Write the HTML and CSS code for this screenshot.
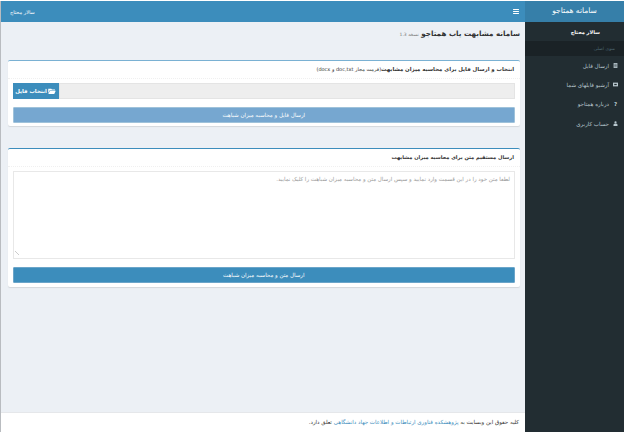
FILE: index.html
```html
<!DOCTYPE html>
<html lang="fa" dir="rtl">
<head>
  <meta charset="UTF-8">
  <title>سامانه همتاجو</title>
  <link rel="stylesheet" href="styles.css">
</head>
<body>
  <div class="wrapper">
    <!-- Sidebar -->
    <aside class="sidebar">
      <div class="logo">سامانه همتاجو</div>
      <div class="user-panel">سالار محتاج</div>
      <div class="menu-header">منوی اصلی</div>
      <ul class="menu">
        <li>
          <svg class="menu-icon" viewBox="0 0 8 8"><path d="M1 0h6v8H1z" fill="#b8c7ce"/><path d="M2 2h4M2 4h4M2 6h4" stroke="#222d32" stroke-width=".8"/></svg>
          <span>ارسال فایل</span>
        </li>
        <li>
          <svg class="menu-icon" viewBox="0 0 8 8"><path d="M0 1h8v6H0z" fill="#b8c7ce"/><path d="M2 3h4v2H2z" fill="#222d32"/></svg>
          <span>آرشیو فایلهای شما</span>
        </li>
        <li>
          <span class="menu-help">?</span>
          <span>درباره همتاجو</span>
        </li>
        <li>
          <svg class="menu-icon" viewBox="0 0 8 8"><circle cx="4" cy="2" r="1.8" fill="#b8c7ce"/><path d="M.8 8V6q0-2 3.2-2t3.2 2v2z" fill="#b8c7ce"/></svg>
          <span>حساب کاربری</span>
        </li>
      </ul>
    </aside>

    <!-- Main Content Area -->
    <div class="main">
      <header class="topbar">
        <svg class="hamburger" viewBox="0 0 7 6"><path d="M0 0h7v1.2H0zM0 2.400h7v1.200H0zM0 4.800h7V6H0z" fill="#fff"/></svg>
        <span class="topbar-user">سالار محتاج</span>
      </header>

      <div class="content">
        <h1 class="page-title">سامانه مشابهت یاب همتاجو <small>نسخه 1.3</small></h1>

        <section class="box box-file">
          <h2 class="box-title">انتخاب و ارسال فایل برای محاسبه میزان مشابهت<span class="formats">(فرمت مجاز doc,txt و docx)</span></h2>
          <div class="box-body">
            <div class="file-row">
              <span class="file-name"></span>
              <button class="file-btn">
                <svg class="folder-icon" viewBox="0 0 10 8"><path d="M0 1h4l1 1h4v1H2L0 7zM2.400 3.800H10L8 8H0z" fill="#fff"/></svg>
                انتخاب فایل
              </button>
            </div>
            <button class="submit submit-light">ارسال فایل و محاسبه میزان شباهت</button>
          </div>
        </section>

        <section class="box box-text">
          <h2 class="box-title">ارسال مستقیم متن برای محاسبه میزان مشابهت</h2>
          <div class="box-body">
            <textarea class="text-input" placeholder="لطفا متن خود را در این قسمت وارد نمایید و سپس ارسال متن و محاسبه میزان شباهت را کلیک نمایید."></textarea>
            <button class="submit">ارسال متن و محاسبه میزان شباهت</button>
          </div>
        </section>
      </div>

      <footer class="footer">
        کلیه حقوق این وبسایت به <a href="#">پژوهشکده فناوری ارتباطات و اطلاعات جهاد دانشگاهی</a> تعلق دارد.
      </footer>
    </div>
  </div>
</body>
</html>
```

FILE: styles.css
```css
/* General Reset */
* {
  margin: 0;
  padding: 0;
  box-sizing: border-box;
}

html,
body {
  height: 100%;
  overflow: hidden;
}

body {
  font-family: 'DejaVu Sans', sans-serif;
  font-size: 5px;
  color: #333;
  background-color: #fff;
  padding-top: 1px;
}

.wrapper {
  display: flex;
  height: 431px;
}

/* Sidebar */
.sidebar {
  width: 99px;
  flex-shrink: 0;
  background-color: #222d32;
}

.logo {
  height: 21px;
  line-height: 20px;
  text-align: center;
  font-size: 7.500px;
  color: #fff;
  background-color: #367fa9;
}

.user-panel {
  height: 19px;
  line-height: 20px;
  padding-right: 24px;
  font-weight: bold;
  color: #fff;
}

.menu-header {
  height: 15px;
  line-height: 15px;
  padding-right: 9px;
  font-size: 4.500px;
  color: #4b646f;
  background-color: #1a2226;
}

.menu {
  list-style: none;
}

.menu li {
  display: flex;
  align-items: center;
  gap: 4px;
  height: 19.300px;
  padding-right: 6px;
  font-size: 5.500px;
  color: #b8c7ce;
}

.menu-icon {
  width: 5px;
  height: 5px;
  flex-shrink: 0;
}

.menu-help {
  width: 5px;
  text-align: center;
  font-weight: bold;
}

/* Main Content Area */
.main {
  flex: 1;
  display: flex;
  flex-direction: column;
  border-left: 1.500px solid #b9bcc0;
}

.topbar {
  height: 21px;
  flex-shrink: 0;
  display: flex;
  align-items: center;
  justify-content: space-between;
  padding: 0 6px 0 9px;
  background-color: #3c8dbc;
}

.hamburger {
  width: 6px;
  height: 5px;
}

.topbar-user {
  color: #fff;
}

.content {
  flex: 1;
  padding: 0 5px 0 6.500px;
  background-color: #ecf0f5;
}

.page-title {
  height: 38px;
  padding: 6px 0 0;
  line-height: 12px;
  font-size: 7.200px;
  font-weight: bold;
}

.page-title small {
  font-size: 4.500px;
  font-weight: normal;
  color: #777;
}

/* Boxes */
.box {
  background-color: #fff;
  border-top: 1px solid #3c8dbc;
  border-radius: 2px;
  box-shadow: 0 1px 1px rgba(0, 0, 0, 0.1);
}

.box-file {
  height: 66px;
  border-top-color: #7ab1d3;
  margin-bottom: 22px;
}

.box-text {
  height: 139px;
}

.box-title {
  padding-right: 6px;
  font-size: 5.400px;
  line-height: 17px;
  height: 18px;
  font-weight: bold;
  border-bottom: 1px dotted #f0f0f0;
}

.box-text .box-title {
  font-size: 5.100px;
}

.formats {
  font-weight: normal;
  font-size: 5px;
}

.box-body {
  padding: 4px 5px 0;
}

.file-row {
  display: flex;
  height: 16px;
  margin-bottom: 8px;
}

.file-name {
  flex: 1;
  background-color: #eee;
  border: 1px solid #e4e4e4;
}

.file-btn {
  width: 46px;
  display: flex;
  align-items: center;
  justify-content: center;
  gap: 1px;
  border: 0;
  font: bold 5.400px 'DejaVu Sans', sans-serif;
  color: #fff;
  background-color: #3c8dbc;
}

.folder-icon {
  width: 8px;
  height: 6px;
}

.submit {
  display: block;
  width: 100%;
  height: 16px;
  border: 1px solid #6ba5c9;
  border-radius: 1px;
  font: 5.500px 'DejaVu Sans', sans-serif;
  color: #fff;
  background-color: #3c8dbc;
}

.submit-light {
  border-color: #9fc2da;
  background-color: #76a7d0;
}

.text-input {
  display: block;
  width: 100%;
  height: 88px;
  margin-bottom: 8px;
  padding: 4px;
  border: 1px solid #e8e8e8;
  font: 5.500px 'DejaVu Sans', sans-serif;
  outline: none;
  resize: none;
  background: linear-gradient(45deg, transparent 40%, #ccc 40%, #ccc 60%, transparent 60%) no-repeat 1px calc(100% - 3px) / 4px 4px;
}

.text-input::placeholder {
  color: #999;
}

/* Footer */
.footer {
  height: 20px;
  flex-shrink: 0;
  line-height: 19px;
  padding-right: 6px;
  border-top: 1px solid #e5e7ea;
  font-size: 5.500px;
  color: #333;
  background-color: #fff;
}

.footer a {
  color: #3c8dbc;
  text-decoration: none;
}
```
